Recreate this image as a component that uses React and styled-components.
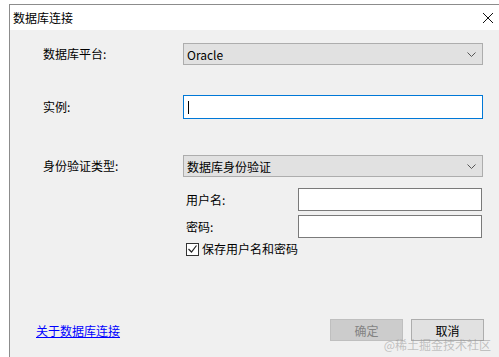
import React from "react";
import styled, { createGlobalStyle } from "styled-components";

const Global = createGlobalStyle`
  html, body {
    margin: 0;
    padding: 0;
    background: #ffffff;
    overflow: hidden;
  }
  * { box-sizing: border-box; }
`;

const Window = styled.div`
  position: relative;
  margin: 4px 0 0 9px;
  width: 490px;
  height: 353px;
  border-left: 1px solid #8c8c8c;
  border-top: 1px solid #8c8c8c;
  font-family: "Noto Sans CJK SC", "Liberation Sans", sans-serif;
  font-size: 12px;
  color: #000;
  display: flex;
  flex-direction: column;
`;

const TitleBar = styled.div`
  height: 25px;
  background: #fff;
  display: flex;
  align-items: center;
  justify-content: space-between;
  padding: 0 5px 0 3px;
  font-size: 12px;
`;

const Close = styled.div`
  width: 12px;
  height: 12px;
  display: flex;
`;

const Body = styled.div`
  flex: 1;
  background: #f0f0f0;
  display: flex;
  flex-direction: column;
  padding: 13px 0 16px 0;
`;

const Row = styled.div`
  display: grid;
  grid-template-columns: 140px 300px;
  align-items: center;
  padding-left: 33px;
  margin-top: ${(p) => p.$top || 0}px;
`;

const Label = styled.div`
  line-height: 16px;
`;

const Select = styled.div`
  height: 22px;
  background: #e1e1e1;
  border: 1px solid #adadad;
  display: flex;
  align-items: center;
  justify-content: space-between;
  padding: 0 6px 0 3px;
`;

const TextBox = styled.div`
  height: ${(p) => p.$h || 23}px;
  background: #fff;
  border: 1px solid ${(p) => (p.$focus ? "#0078d7" : "#7a7a7a")};
  display: flex;
  align-items: center;
  padding-left: 4px;
`;

const Caret = styled.span`
  width: 1px;
  height: 13px;
  background: #000;
`;

const SubGrid = styled.div`
  display: grid;
  grid-template-columns: 112px 184px;
  row-gap: 4px;
  align-items: center;
  padding-left: 176px;
  margin-top: 11px;
`;

const Check = styled.label`
  display: flex;
  align-items: center;
  gap: 3px;
  padding-left: 176px;
  margin-top: 4px;
  line-height: 14px;
`;

const Box = styled.span`
  width: 13px;
  height: 13px;
  border: 1px solid #333;
  background: #fff;
  display: flex;
  align-items: center;
  justify-content: center;
`;

const Footer = styled.div`
  margin-top: auto;
  display: flex;
  align-items: center;
  padding: 0 15px 0 26px;
`;

const Link = styled.a`
  color: #0000ff;
  text-decoration: underline;
  cursor: pointer;
`;

const Buttons = styled.div`
  margin-left: auto;
  display: flex;
  gap: 8px;
`;

const Button = styled.button`
  width: 73px;
  height: 22px;
  font-family: inherit;
  font-size: 12px;
  padding: 0;
  border: 1px solid ${(p) => (p.disabled ? "#bfbfbf" : "#adadad")};
  background: ${(p) => (p.disabled ? "#cccccc" : "#e1e1e1")};
  color: ${(p) => (p.disabled ? "#838383" : "#000")};
`;

const Watermark = styled.div`
  position: absolute;
  right: 8px;
  bottom: 4px;
  font-size: 12px;
  color: rgba(150, 150, 150, 0.55);
  pointer-events: none;
`;

const Chevron = () => (
  <svg width="9" height="5" viewBox="0 0 9 5">
    <path d="M0.5 0.5 L4.5 4.5 L8.5 0.5" fill="none" stroke="#555" strokeWidth="1" />
  </svg>
);

export default function App() {
  return (
    <>
      <Global />
      <Window>
        <TitleBar>
          <span>数据库连接</span>
          <Close>
            <svg width="12" height="12" viewBox="0 0 12 12">
              <path d="M1 1 L11 11 M11 1 L1 11" stroke="#111" strokeWidth="1" />
            </svg>
          </Close>
        </TitleBar>
        <Body>
          <Row>
            <Label>数据库平台:</Label>
            <Select>
              <span>Oracle</span>
              <Chevron />
            </Select>
          </Row>
          <Row $top={30}>
            <Label>实例:</Label>
            <TextBox $focus $h={24}>
              <Caret />
            </TextBox>
          </Row>
          <Row $top={36}>
            <Label>身份验证类型:</Label>
            <Select>
              <span>数据库身份验证</span>
              <Chevron />
            </Select>
          </Row>
          <SubGrid>
            <Label>用户名:</Label>
            <TextBox $h={23} />
            <Label>密码:</Label>
            <TextBox $h={23} />
          </SubGrid>
          <Check>
            <Box>
              <svg width="9" height="8" viewBox="0 0 9 8">
                <path d="M0.5 4 L3.5 7 L8.5 0.5" fill="none" stroke="#222" strokeWidth="1.2" />
              </svg>
            </Box>
            保存用户名和密码
          </Check>
          <Footer>
            <Link>关于数据库连接</Link>
            <Buttons>
              <Button disabled>确定</Button>
              <Button>取消</Button>
            </Buttons>
          </Footer>
        </Body>
        <Watermark>@稀土掘金技术社区</Watermark>
      </Window>
    </>
  );
}
